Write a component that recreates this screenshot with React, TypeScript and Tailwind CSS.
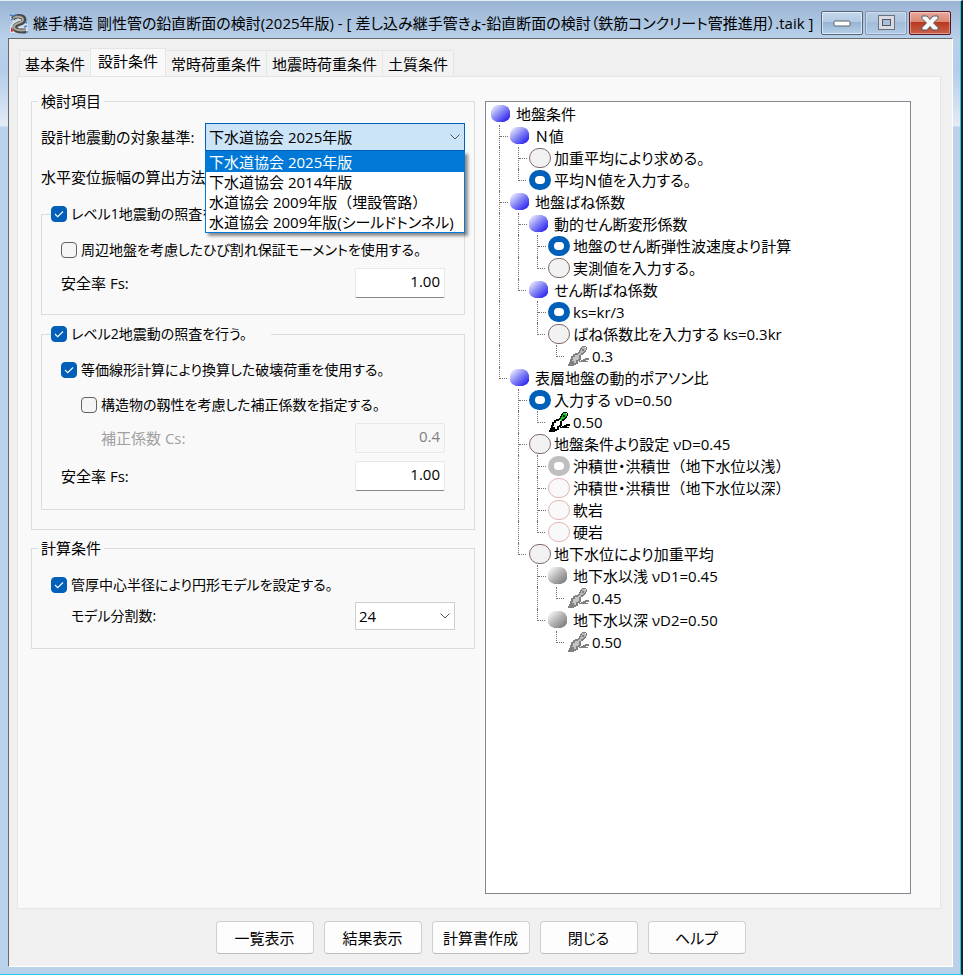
import React, { useState } from 'react';
import clsx from 'clsx';

const tabs = ['基本条件', '設計条件', '常時荷重条件', '地震時荷重条件', '土質条件'];

const standards = [
  '下水道協会 2025年版',
  '下水道協会 2014年版',
  '水道協会 2009年版（埋設管路）',
  '水道協会 2009年版(シールドトンネル)',
];

const footerButtons = ['一覧表示', '結果表示', '計算書作成', '閉じる', 'ヘルプ'];

type Kind = 'ball' | 'radio' | 'pen';

type TreeRow = {
  level: number;
  kind: Kind;
  text: string;
  group?: string;
  on?: boolean;
  off?: boolean;
};

const rows: TreeRow[] = [
  { level: 0, kind: 'ball', text: '地盤条件' },
  { level: 1, kind: 'ball', text: 'Ｎ値' },
  { level: 2, kind: 'radio', group: 'n', text: '加重平均により求める。' },
  { level: 2, kind: 'radio', group: 'n', text: '平均Ｎ値を入力する。', on: true },
  { level: 1, kind: 'ball', text: '地盤ばね係数' },
  { level: 2, kind: 'ball', text: '動的せん断変形係数' },
  { level: 3, kind: 'radio', group: 'gd', text: '地盤のせん断弾性波速度より計算', on: true },
  { level: 3, kind: 'radio', group: 'gd', text: '実測値を入力する。' },
  { level: 2, kind: 'ball', text: 'せん断ばね係数' },
  { level: 3, kind: 'radio', group: 'ks', text: 'ks=kr/3', on: true },
  { level: 3, kind: 'radio', group: 'ks', text: 'ばね係数比を入力する ks=0.3kr' },
  { level: 4, kind: 'pen', text: '0.3', off: true },
  { level: 1, kind: 'ball', text: '表層地盤の動的ポアソン比' },
  { level: 2, kind: 'radio', group: 'vd', text: '入力する νD=0.50', on: true },
  { level: 3, kind: 'pen', text: '0.50' },
  { level: 2, kind: 'radio', group: 'vd', text: '地盤条件より設定 νD=0.45' },
  { level: 3, kind: 'radio', group: 'soil', text: '沖積世・洪積世（地下水位以浅）', on: true, off: true },
  { level: 3, kind: 'radio', group: 'soil', text: '沖積世・洪積世（地下水位以深）', off: true },
  { level: 3, kind: 'radio', group: 'soil', text: '軟岩', off: true },
  { level: 3, kind: 'radio', group: 'soil', text: '硬岩', off: true },
  { level: 2, kind: 'radio', group: 'vd', text: '地下水位により加重平均' },
  { level: 3, kind: 'ball', text: '地下水以浅 νD1=0.45', off: true },
  { level: 4, kind: 'pen', text: '0.45', off: true },
  { level: 3, kind: 'ball', text: '地下水以深 νD2=0.50', off: true },
  { level: 4, kind: 'pen', text: '0.50', off: true },
];

// true when another node of this level follows under the same parent
function continues(index: number, level: number) {
  for (let i = index + 1; i < rows.length; i++) {
    if (rows[i].level < level) return false;
    if (rows[i].level === level) return true;
  }
  return false;
}

// kana are proportional, full-width brackets keep their full width
function Jp({ text }: { text: string }) {
  return (
    <>
      {text.split(/([（）])/).map((part, i) =>
        part === '（' || part === '）' ? (
          <span key={i} className="[font-feature-settings:normal]">{part}</span>
        ) : (
          part
        )
      )}
    </>
  );
}

function Ball({ off }: { off?: boolean }) {
  const id = off ? 'ball-gray' : 'ball-blue';
  return (
    <svg width="20" height="18" viewBox="0 0 20 18" aria-hidden="true">
      <defs>
        <linearGradient id={id} x1="0.1" y1="0.1" x2="0.9" y2="0.9">
          <stop offset="0" stopColor={off ? '#f4f4f4' : '#e6e6ff'} />
          <stop offset="0.5" stopColor={off ? '#b4b4b4' : '#8080f4'} />
          <stop offset="1" stopColor={off ? '#7c7c7c' : '#2a20f0'} />
        </linearGradient>
      </defs>
      <path d="M6 0h7l4 2 2 4v6l-2 3-4 2H6l-4-2-2-3V6l2-4z" fill={`url(#${id})`} />
    </svg>
  );
}

function Pen({ off }: { off?: boolean }) {
  const ink = off ? '#808080' : '#000000';
  return (
    <svg width="22" height="20" viewBox="0 0 22 20" shapeRendering="crispEdges" aria-hidden="true">
      <path d="M14 1h4v1h1v3h-1v1h-1v1h-1v1h-1v1h-4V7h1V5h1V3h1z" fill={off ? '#b8b8b8' : '#10d820'} />
      <path d="M15 0h4v1h-4zM19 1h1v3h-1zM18 4h1v2h-1zM17 5h1v2h-1zM16 6h1v2h-1zM14 7h2v2h-2zM14 1h1v2h-1zM13 2h1v3h-1zM12 4h1v3h-1zM11 6h1v2h-1zM15 3h2v2h-2z" fill={ink} />
      <path d="M7 9h1V8h5v1h1v4h-1v2h-2v2H5v-4h1v-3h1z" fill={off ? '#c4c4c4' : '#ffffff'} />
      <path d="M8 7h3v2H8zM6 8h2v3H6zM4 10h2v4H4zM3 13h2v3H3zM12 9h2v5h-2zM11 13h2v2h-2zM9 14h2v4H9z" fill={ink} />
      <path d="M3 15h4v2h3v1H9v1H7v1H1v-2h1v-2h1zM12 15h2v-1h2v-1h2v-1h4v2h-3v1h2v1h-9z" fill={ink} />
    </svg>
  );
}

function TreeItem({ row, index }: { row: TreeRow; index: number }) {
  const id = `node-${index}`;
  return (
    <li className="flex h-[22px] items-center">
      {Array.from({ length: row.level }, (_, i) => {
        const level = i + 1;
        const more = continues(index, level);
        return (
          <span key={i} className="flex h-full w-[19px] shrink-0 pl-2">
            {more && <span className="h-full border-l border-dotted border-[#707070]" />}
            {level === row.level && (
              <span className={clsx('h-3 w-2 border-b border-dotted border-[#707070]', !more && 'border-l')} />
            )}
          </span>
        );
      })}
      <span className="mr-[3px] flex w-[22px] shrink-0">
        {row.kind === 'ball' && <Ball off={row.off} />}
        {row.kind === 'pen' && <Pen off={row.off} />}
        {row.kind === 'radio' && (
          <input
            id={id}
            type="radio"
            name={row.group}
            defaultChecked={row.on}
            disabled={row.off}
            className="h-5 w-[22px] appearance-none rounded-full border border-[#806868] bg-[#f2f2f2] checked:border-[6px] checked:border-[#005fb8] checked:bg-white disabled:border-[#e2b4b4] disabled:bg-[#f9f9f9] disabled:checked:border-[#bfbfbf] disabled:checked:bg-white"
          />
        )}
      </span>
      {row.kind === 'radio' ? (
        <label htmlFor={id} className="whitespace-nowrap"><Jp text={row.text} /></label>
      ) : (
        <span className="whitespace-nowrap"><Jp text={row.text} /></span>
      )}
    </li>
  );
}

function Check({ label, checked }: { label: string; checked?: boolean }) {
  return (
    <label className="flex h-6 items-center gap-1 text-sm whitespace-nowrap">
      <span className="grid">
        <input
          type="checkbox"
          defaultChecked={checked}
          className="peer size-4 appearance-none rounded-[4px] border border-[#626262] bg-[#f5f5f5] [grid-area:1/1] checked:border-[#005fb8] checked:bg-[#005fb8]"
        />
        <svg viewBox="0 0 16 16" className="pointer-events-none invisible size-4 [grid-area:1/1] peer-checked:visible" aria-hidden="true">
          <path d="M4 8l2.7 2.7L12 5.5" fill="none" stroke="#fff" strokeWidth="1.1" />
        </svg>
      </span>
      {label}
    </label>
  );
}

function NumberField({ id, label, value, disabled }: { id: string; label: string; value: string; disabled?: boolean }) {
  return (
    <div className="flex items-center justify-between">
      <label htmlFor={id} className={clsx(disabled && 'text-[#a0a0a0]')}>{label}</label>
      <input
        id={id}
        defaultValue={value}
        disabled={disabled}
        className="h-[30px] w-[90px] rounded-[2px] border border-[#e8e8e8] border-b-[#868686] bg-white px-1 pb-1 text-right disabled:border-b-[#e8e8e8] disabled:bg-[#f8f8f8] disabled:text-[#808080]"
      />
    </div>
  );
}

function Chevron() {
  return (
    <svg viewBox="0 0 10 6" className="pointer-events-none absolute top-[11px] right-[5px] h-[6px] w-[10px]" aria-hidden="true">
      <path d="M0.5 0.5L5 5l4.500-4.500" fill="none" stroke="#555" />
    </svg>
  );
}

function AppIcon() {
  return (
    <svg width="20" height="20" viewBox="0 0 20 20" className="mt-2" aria-hidden="true">
      <path d="M1 1h15v4l3 5v9H1v-7l3-4-3-3z" fill="#e4e9ee" opacity="0.7" />
      <path d="M4 5c2-3 11-4 11 1 0 4-9 3-9 7 0 5 7 4 11 4" fill="none" stroke="#484848" strokeWidth="5" />
      <path d="M4 4c3-2 10-2 10 2 0 3-9 3-9 7 0 3 6 4 12 3" fill="none" stroke="#a8a8a0" strokeWidth="2" />
      <path d="M6 6c3-2 6-1 5 1" fill="none" stroke="#e8e8e8" />
      <path d="M1 1l3 1M2 6l2-1M16 8l2 1M15 13l3-1M17 18h2M6 1h2" stroke="#3f7fd6" strokeWidth="1.500" />
      <path d="M2 13l3 4-3 1z" fill="#d83020" />
    </svg>
  );
}

function TitleBar() {
  return (
    <header className="flex h-[37px] items-center pr-[10px] pl-[9px]">
      <AppIcon />
      <h1 className="ml-1 min-w-0 flex-1 whitespace-nowrap pt-1.5">
        継手構造 剛性管の鉛直断面の検討(2025年版) - [ 差し込み継手管きょ-鉛直断面の検討（鉄筋コンクリート管推進用）.taik ]
      </h1>
      <div className="flex gap-0.5 pt-1.5">
        <button aria-label="最小化" className="flex h-6 w-[42px] items-center justify-center rounded-[2px] border border-[#56657c] bg-[linear-gradient(#c5d7ea_0,#b3cae2_45%,#98b4d2_46%,#b5cfe8_100%)] shadow-[inset_0_0_0_1px_#ffffff90]">
          <svg width="18" height="8" viewBox="0 0 18 8">
            <rect x="1" y="2" width="16" height="5" rx="1" fill="#fff" stroke="#5c6370" />
          </svg>
        </button>
        <button aria-label="最大化" className="flex h-6 w-[42px] items-center justify-center rounded-[2px] border border-[#8496b0] bg-[linear-gradient(#b9cee6_0,#adc5df_45%,#a1bcd9_46%,#b1cbe6_100%)] shadow-[inset_0_0_0_1px_#ffffff50]">
          <svg width="17" height="15" viewBox="0 0 17 15">
            <rect x="0.500" y="0.500" width="16" height="14" fill="#dcdce0" stroke="#6c7180" />
            <rect x="4.500" y="4.500" width="8" height="6" fill="#a8c0da" stroke="#50586a" />
          </svg>
        </button>
        <button aria-label="閉じる" className="flex h-6 w-[42px] items-center justify-center rounded-[2px] border border-[#581420] bg-[linear-gradient(#e9a99b_0,#d98874_45%,#b8371e_46%,#c9614a_100%)] shadow-[inset_0_0_0_1px_#ffffff60]">
          <svg width="18" height="16" viewBox="0 0 18 16">
            <path d="M1 1h5l3 3.500L12 1h5v2.500L12.500 8l4.500 4.500V15h-5l-3-3.500L6 15H1v-2.500L5.500 8 1 3.500z" fill="#f8f8f8" stroke="#565b68" />
          </svg>
        </button>
      </div>
    </header>
  );
}

export default function App() {
  const [tab, setTab] = useState(1);
  const [standard, setStandard] = useState(standards[0]);
  const [open, setOpen] = useState(true);

  return (
    <div className="flex min-h-screen flex-col border-t border-r-2 border-b border-t-[#e4ebf2] border-r-[#20242a] border-b-[#1fc8e4] bg-[#b9d1ea] bg-[linear-gradient(#99b4d3_0,#b9d1ea_38px,#b3cdea_70px,#e2ecf6_125px,#b9d1ea_126px)] font-['Open_Sans','Noto_Sans_CJK_JP',sans-serif] text-[15px] leading-[22px] text-black shadow-[inset_-1px_0_#1fc8e4] [font-feature-settings:'palt']">
      <TitleBar />

      <main className="mr-2 mb-[7px] ml-2 flex flex-1 flex-col border border-t-[#696969] border-r-white border-b-white border-l-[#696969] bg-[#f0f0f0] px-2 pt-[9px] pb-3">
        <nav role="tablist" className="flex items-end pl-0.5">
          {tabs.map((name, i) => (
            <button
              key={name}
              role="tab"
              aria-selected={tab === i}
              onClick={() => setTab(i)}
              className={clsx(
                '-mr-px border border-b-0 border-[#e5e5e5] whitespace-nowrap',
                tab === i ? 'h-7 bg-[#f9f9f9] px-[7px] pb-1' : 'h-[26px] bg-[#f3f3f3] px-[5px]'
              )}
            >
              {name}
            </button>
          ))}
        </nav>

        <div role="tabpanel" className="mr-[3px] flex flex-1 gap-[10px] border border-[#e5e5e5] bg-[#f9f9f9] pt-[13px] pr-[29px] pb-[14px] pl-[13px]">
          <div className="flex w-[444px] shrink-0 flex-col gap-[7px]">
            <fieldset className="min-w-0 border border-[#dcdcdc] px-[9px] pb-[19px]">
              <legend className="-ml-[3px] px-[3px]">検討項目</legend>

              <div className="flex items-center justify-between pt-[11px]">
                <label htmlFor="standard" className="whitespace-nowrap">設計地震動の対象基準:</label>
                <div className="relative w-[260px]">
                  <select
                    id="standard"
                    value={standard}
                    onChange={(e) => setStandard(e.target.value)}
                    onMouseDown={(e) => {
                      e.preventDefault();
                      setOpen(!open);
                    }}
                    className="h-7 w-full appearance-none border border-[#005fb8] bg-[#cce4f7] px-[3px]"
                  >
                    {standards.map((s) => (
                      <option key={s}>{s}</option>
                    ))}
                  </select>
                  <Chevron />
                  {open && (
                    <ul role="listbox" className="absolute top-7 right-0 left-0 z-10 border border-[#0078d7] bg-white shadow-[3px_3px_3px_#00000070]">
                      {standards.map((s) => (
                        <li
                          key={s}
                          role="option"
                          aria-selected={s === standard}
                          onClick={() => {
                            setStandard(s);
                            setOpen(false);
                          }}
                          className={clsx('h-5 px-[3px] leading-5 whitespace-nowrap', s === standard && 'bg-[#0078d7] text-white')}
                        >
                          <Jp text={s} />
                        </li>
                      ))}
                    </ul>
                  )}
                </div>
              </div>

              <div className="mt-3 flex h-7 items-center whitespace-nowrap">水平変位振幅の算出方法:</div>

              <fieldset className="mt-[11px] min-w-0 border border-[#dcdcdc] pr-[19px] pb-4 pl-[19px]">
                <legend className="-ml-[10px] w-[220px]">
                  <Check label="レベル1地震動の照査を行う。" checked />
                </legend>
                <div className="flex flex-col gap-1.5 pt-3">
                  <Check label="周辺地盤を考慮したひび割れ保証モーメントを使用する。" />
                  <NumberField id="fs1" label="安全率 Fs:" value="1.00" />
                </div>
              </fieldset>

              <fieldset className="mt-[7px] min-w-0 border border-[#dcdcdc] pr-[19px] pb-[18px] pl-[19px]">
                <legend className="-ml-[10px] w-[220px]">
                  <Check label="レベル2地震動の照査を行う。" checked />
                </legend>
                <div className="pt-3">
                  <Check label="等価線形計算により換算した破壊荷重を使用する。" checked />
                  <div className="flex flex-col gap-1.5 pt-[11px] pl-5">
                    <Check label="構造物の靱性を考慮した補正係数を指定する。" />
                    <div className="pl-5">
                      <NumberField id="cs" label="補正係数 Cs:" value="0.4" disabled />
                    </div>
                  </div>
                  <div className="pt-2">
                    <NumberField id="fs2" label="安全率 Fs:" value="1.00" />
                  </div>
                </div>
              </fieldset>
            </fieldset>

            <fieldset className="min-w-0 border border-[#dcdcdc] pr-[19px] pb-[18px] pl-[19px]">
              <legend className="-ml-[13px] px-[3px]">計算条件</legend>
              <div className="flex flex-col gap-[5px] pt-[14px]">
                <Check label="管厚中心半径により円形モデルを設定する。" checked />
                <div className="flex items-center justify-between pl-5">
                  <label htmlFor="division" className="text-sm">モデル分割数:</label>
                  <div className="relative w-[100px]">
                    <select id="division" defaultValue="24" className="h-7 w-full appearance-none border border-[#cfcfcf] bg-white px-[3px]">
                      <option>24</option>
                      <option>36</option>
                      <option>48</option>
                    </select>
                    <Chevron />
                  </div>
                </div>
              </div>
            </fieldset>
          </div>

          <ul className="mt-[11px] min-w-0 flex-1 border border-[#828790] bg-white pt-px pl-[5px]">
            {rows.map((row, i) => (
              <TreeItem key={i} row={row} index={i} />
            ))}
          </ul>
        </div>

        <footer className="flex justify-center gap-[10px] pt-3">
          {footerButtons.map((name) => (
            <button key={name} className="h-[33px] w-[98px] rounded-[4px] border border-[#cfcfcf] border-b-[#bcbcbc] bg-[#fdfdfd] whitespace-nowrap">
              {name}
            </button>
          ))}
        </footer>
      </main>
    </div>
  );
}
